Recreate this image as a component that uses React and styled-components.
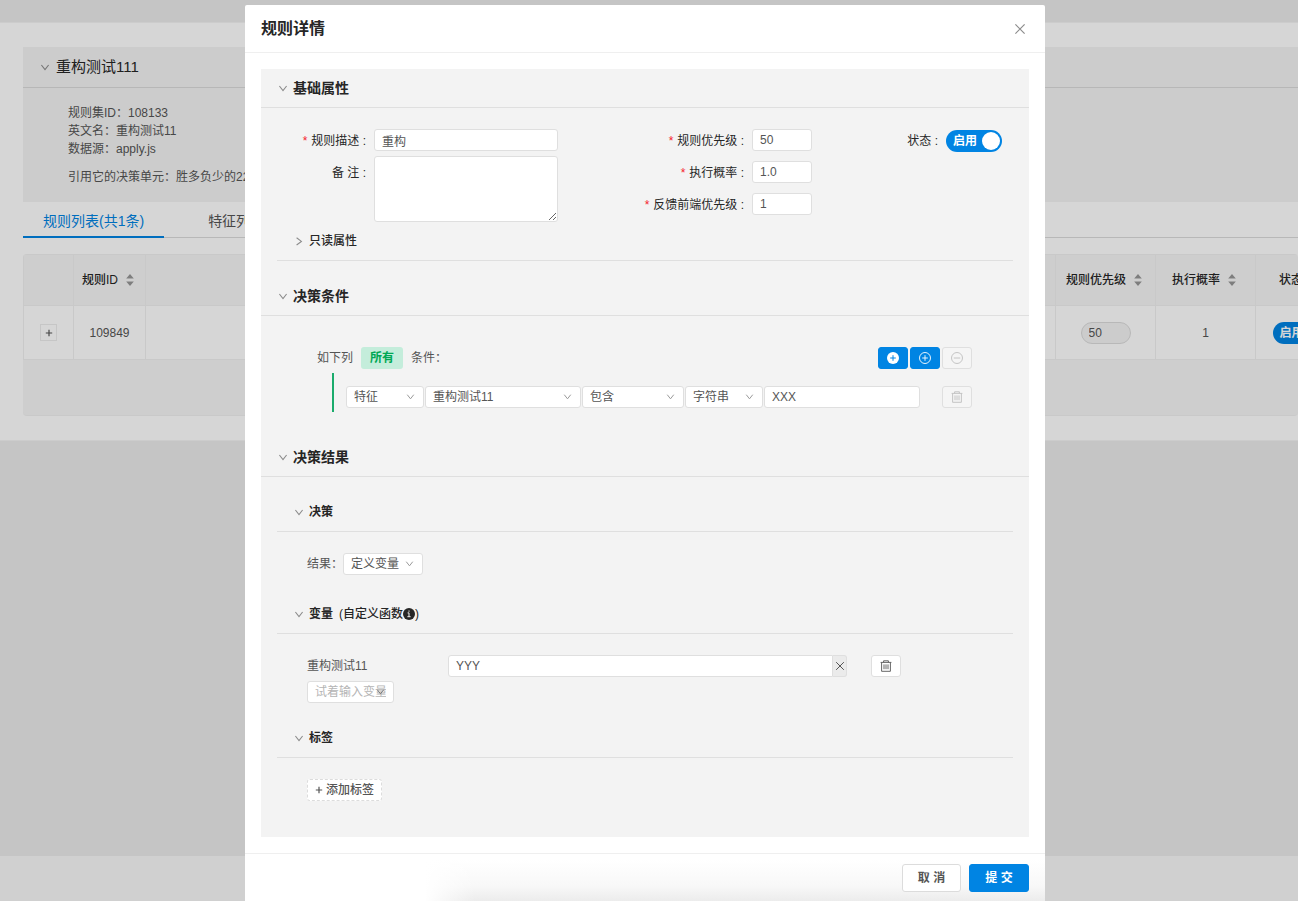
import React, { useState } from 'react';
import styled, { createGlobalStyle } from 'styled-components';

const GlobalStyle = createGlobalStyle`
  * {
    box-sizing: border-box;
  }

  body {
    margin: 0;
    overflow: hidden;
    color: #555;
    background: #ebebeb;
    font: 12px/18px "Liberation Sans", "Noto Sans CJK SC", sans-serif;
  }

  button, input, select, textarea {
    margin: 0;
    color: inherit;
    font: inherit;
  }

  h1, h2, h3, p {
    margin: 0;
  }
`;

// ---------- icons ----------

const Icon = styled.svg`
  display: block;
  flex: none;
  width: ${({ $size }) => $size || 12}px;
  height: ${({ $size }) => $size || 12}px;
  fill: none;
  stroke: currentColor;
`;

const ChevronDown = ({ size = 10 }) => (
  <Icon $size={size} viewBox="0 0 10 10" aria-hidden="true">
    <path d="M1.4 3 5 7.6 8.6 3" strokeWidth="1.1" />
  </Icon>
);

const ChevronRight = () => (
  <Icon $size={10} viewBox="0 0 10 10" aria-hidden="true">
    <path d="M2.6 1.8 7.4 5.4 2.6 9" strokeWidth="1.1" />
  </Icon>
);

const CloseIcon = ({ size = 12 }) => (
  <Icon $size={size} viewBox="0 0 12 12" aria-hidden="true">
    <path d="M1.4 1.4 10.6 10.6M10.6 1.4 1.4 10.6" strokeWidth="1.2" />
  </Icon>
);

const PlusIcon = () => (
  <Icon $size={8} viewBox="0 0 8 8" aria-hidden="true">
    <path d="M4 .8v6.4M.8 4h6.4" strokeWidth="1.2" />
  </Icon>
);

const PlusCircleFilled = () => (
  <Icon $size={12} viewBox="0 0 12 12" aria-hidden="true">
    <circle cx="6" cy="6" r="6" fill="#fff" stroke="none" />
    <path d="M6 3.2v5.6M3.2 6h5.6" stroke="#0084e3" />
  </Icon>
);

const PlusCircle = () => (
  <Icon $size={12} viewBox="0 0 12 12" aria-hidden="true">
    <circle cx="6" cy="6" r="5.5" strokeWidth=".9" />
    <path d="M6 3.2v5.6M3.2 6h5.6" strokeWidth=".9" />
  </Icon>
);

const MinusCircle = () => (
  <Icon $size={12} viewBox="0 0 12 12" aria-hidden="true">
    <circle cx="6" cy="6" r="5.5" strokeWidth=".9" />
    <path d="M2.8 6h6.4" strokeWidth=".9" />
  </Icon>
);

const TrashIcon = () => (
  <Icon $size={12} viewBox="0 0 12 12" aria-hidden="true">
    <path d="M.6 2.4h10.8M3.6 2.3V.8h4.8v1.5M1.6 2.6v8.7h8.8V2.6M4 4.4v4.8M6 4.4v4.8M8 4.4v4.8" strokeWidth=".9" />
  </Icon>
);

const SortIcon = () => (
  <Icon $size={14} viewBox="0 0 14 14" aria-hidden="true">
    <path d="M7 1 10.8 5.4H3.2zM7 13 3.2 8.6h7.6z" fill="#979797" stroke="none" />
  </Icon>
);

const InfoIcon = () => (
  <Icon $size={12} viewBox="0 0 12 12" aria-hidden="true">
    <circle cx="6" cy="6" r="6" fill="currentColor" stroke="none" />
    <path d="M4.6 4.9H6v3.6M4.4 8.7h3.2M6 2.5v1.2" stroke="#f3f3f3" />
  </Icon>
);

// ---------- page behind the dialog ----------

const Page = styled.div`
  display: flex;
  flex-direction: column;
  min-height: 100vh;
  overflow: hidden;
`;

const TopBar = styled.div`
  height: 23px;
  border-bottom: 1px solid #f3f3f3;
`;

const Content = styled.main`
  padding: 24px 0 24px 23px;
  background: #fff;
  border-bottom: 1px solid #f3f3f3;
`;

const PageFooter = styled.footer`
  height: 45px;
  margin-top: auto;
  background: #f8f8f8;
`;

const Summary = styled.section`
  background: #f3f3f3;
`;

const SummaryHead = styled.h1`
  display: flex;
  align-items: center;
  gap: 6px;
  height: 41px;
  padding-left: 17px;
  color: #262626;
  border-bottom: 1px solid #dadada;
  font-size: 15px;
  font-weight: 400;

  svg {
    color: #8c8c8c;
  }
`;

const SummaryBody = styled.div`
  padding: 16px 45px;

  p:last-child {
    margin-top: 10px;
  }
`;

const Tabs = styled.nav`
  display: flex;
  gap: 24px;
  height: 36px;
  margin-bottom: 16px;
  border-bottom: 1px solid #dcdcdc;
`;

const Tab = styled.button`
  height: 36px;
  padding: 3px 20px 0;
  color: ${({ $active }) => ($active ? '#0084e3' : '#555')};
  background: none;
  border: 0;
  border-bottom: 2px solid ${({ $active }) => ($active ? '#0084e3' : 'transparent')};
  font-size: 14px;
`;

const TableBox = styled.div`
  overflow: hidden;
  background: #f6f6f6;
  padding-bottom: 55px;
  border-bottom: 1px solid #f0f0f0;
  border-radius: 4px;
`;

// the last columns run past the right edge of the window
const Table = styled.table`
  width: calc(100% + 48px);
  table-layout: fixed;
  border-collapse: separate;
  border-spacing: 0;
  border: 1px solid #f0f0f0;
  border-width: 1px 0 0 1px;
  text-align: center;

  th, td {
    padding: 0;
    border: 1px solid #f0f0f0;
    border-width: 0 1px 1px 0;
  }

  th {
    height: 51px;
    color: #262626;
    font-weight: 500;
  }

  td {
    height: 54px;
    background: #fff;
  }
`;

const Column = styled.col`
  width: ${({ $width }) => ($width ? `${$width}px` : 'auto')};
`;

const SortHead = styled.span`
  display: flex;
  align-items: center;
  justify-content: center;
  gap: 5px;
`;

const ExpandButton = styled.button`
  display: grid;
  place-items: center;
  width: 17px;
  height: 17px;
  margin: 0 auto;
  padding: 0;
  background: #fff;
  border: 1px solid #ececec;
`;

const PriorityInput = styled.input`
  display: block;
  width: 50px;
  height: 22px;
  margin: 0 auto;
  padding: 0 7px;
  background: #f3f3f3;
  border: 1px solid #dcdcdc;
  border-radius: 11px;
`;

// ---------- dialog ----------

const Mask = styled.div`
  position: fixed;
  inset: 0;
  padding: 5px 8px 0 0;
  overflow: hidden;
  background: rgba(0, 0, 0, 0.16);
`;

const Dialog = styled.div`
  width: 100%;
  max-width: 800px;
  margin: 0 auto;
  background: #fff;
  border-radius: 2px;
`;

const DialogHead = styled.header`
  display: flex;
  align-items: center;
  justify-content: space-between;
  height: 48px;
  padding: 0 16px;
  border-bottom: 1px solid #efefef;
`;

const DialogTitle = styled.h2`
  color: #262626;
  font-size: 16px;
  line-height: 24px;
  font-weight: 700;
`;

const PlainButton = styled.button`
  padding: 3px;
  color: #8c8c8c;
  background: none;
  border: 0;
`;

const DialogBody = styled.div`
  padding: 16px;
`;

const DialogFoot = styled.footer`
  display: flex;
  justify-content: flex-end;
  gap: 8px;
  padding: 10px 16px;
  border-top: 1px solid #efefef;
  background:
    linear-gradient(to right, #fff 180px, transparent 230px),
    linear-gradient(to bottom, #fff 6px, #f8f8f8 32px, #ebebeb 48px);
`;

const FootButton = styled.button`
  min-width: ${({ $primary }) => ($primary ? 60 : 59)}px;
  height: 28px;
  padding: 0;
  color: ${({ $primary }) => ($primary ? '#fff' : '#555')};
  background: ${({ $primary }) => ($primary ? '#0084e3' : '#fff')};
  border: 1px solid ${({ $primary }) => ($primary ? '#0084e3' : '#dcdcdc')};
  border-radius: 3px;
  font-weight: 700;
`;

const Panels = styled.div`
  padding-bottom: 36px;
  background: #f3f3f3;
`;

const PanelHead = styled.h3`
  display: flex;
  align-items: center;
  gap: 6px;
  height: 39px;
  margin: ${({ $sub }) => ($sub ? '0 16px' : '0')};
  padding-left: 17px;
  color: #262626;
  border-bottom: 1px solid #dfdfdf;
  font-size: ${({ $sub }) => ($sub ? 12 : 14)}px;
  font-weight: ${({ $light }) => ($light ? 500 : 700)};
`;

const ToggleButton = styled.button`
  display: flex;
  align-items: center;
  gap: 5px;
  padding: 0;
  background: none;
  border: 0;

  svg {
    color: #8c8c8c;
  }
`;

const Note = styled.span`
  display: flex;
  align-items: center;
  font-weight: 500;
`;

const BasicForm = styled.div`
  display: grid;
  grid-template-columns: 297px 254px 1fr;
  padding: 21px 27px 0 0;
`;

const FormColumn = styled.div`
  display: flex;
  flex-direction: column;
  align-items: flex-end;
  gap: ${({ $gap }) => $gap || 10}px;
`;

const Field = styled.div`
  display: flex;
  gap: 8px;
`;

const Label = styled.label`
  padding-top: ${({ $low }) => ($low ? 8 : 3)}px;
  color: #262626;

  &::before {
    content: ${({ $required }) => ($required ? '"*"' : 'none')};
    margin-right: 4px;
    color: #f5222d;
  }
`;

const Input = styled.input`
  width: ${({ $width }) => $width}px;
  height: 22px;
  padding: 0 7px;
  background: #fff;
  border: 1px solid #dfdfdf;
  border-radius: 3px;
  outline: 0;
`;

const Remark = styled.textarea`
  display: block;
  width: 184px;
  height: 66px;
  padding: 2px 7px;
  background: #fff;
  border: 1px solid #dfdfdf;
  border-radius: 3px;
`;

const SwitchBox = styled.label`
  display: flex;
  align-items: center;
  gap: 5px;
  width: 56px;
  height: 22px;
  padding: 0 2px 0 7px;
  color: #fff;
  background: #0084e3;
  border-radius: 11px;
  font-weight: 700;

  input {
    appearance: none;
    order: 1;
    flex: none;
    width: 18px;
    height: 18px;
    background: #fff;
    border-radius: 9px;
  }
`;

const SwitchSlot = styled.div`
  display: flex;
  justify-content: center;
`;

const SwitchField = styled(Field)`
  padding-top: 1px;

  ${Label} {
    padding-top: 2px;
  }
`;

const Conditions = styled.div`
  padding: 31px 57px 26px 56px;
`;

const ConditionHead = styled.div`
  display: flex;
  align-items: center;
  gap: 8px;
  margin-bottom: 4px;
`;

const MatchTag = styled.button`
  height: 22px;
  padding: 0 9px;
  color: #00a854;
  background: #c4eddb;
  border: 0;
  border-radius: 3px;
  font-weight: 700;
`;

const IconButtons = styled.div`
  display: flex;
  gap: 2px;
  margin-left: auto;
`;

const IconButton = styled.button`
  display: grid;
  place-items: center;
  width: 30px;
  height: 22px;
  padding: 0;
  color: ${({ $primary, disabled }) => ($primary ? '#fff' : disabled ? '#bfbfbf' : '#555')};
  background: ${({ $primary, disabled }) => ($primary ? '#0084e3' : disabled ? '#f5f5f5' : '#fff')};
  border: 1px solid ${({ $primary }) => ($primary ? '#0084e3' : '#dfdfdf')};
  border-radius: 3px;
`;

const ConditionRow = styled.div`
  display: flex;
  gap: 1px;
  margin-left: 15px;
  padding: 13px 0 4px 12px;
  border-left: 2px solid #1aab6c;

  > button {
    margin-left: auto;
  }
`;

const SelectBox = styled.span`
  position: relative;
  display: block;
  width: ${({ $width }) => $width}px;

  select {
    display: block;
    appearance: none;
    width: 100%;
    height: 22px;
    padding: 0 7px;
    color: ${({ $empty }) => ($empty ? '#b5b5b5' : '#555')};
    background: #fff;
    border: 1px solid #dfdfdf;
    border-radius: 3px;
  }

  svg {
    position: absolute;
    top: 6px;
    right: 9px;
    color: ${({ $empty }) => ($empty ? '#777' : '#999')};
    pointer-events: none;
  }
`;

const SubPanels = styled.div`
  padding-top: 16px;
`;

const SubPanel = styled.div`
  padding: 21px 46px ${({ $bottom }) => $bottom || 0}px;
`;

const ResultRow = styled.div`
  display: flex;
  align-items: center;
`;

const VariableRow = styled.div`
  display: grid;
  grid-template-columns: 141px minmax(0, 399px) 30px;
  align-items: center;
  margin-bottom: 4px;

  > button {
    margin-left: 24px;
  }
`;

const InputGroup = styled.div`
  display: flex;

  input {
    flex: 1;
    min-width: 0;
    border-radius: 3px 0 0 3px;
  }
`;

const ClearButton = styled.button`
  display: grid;
  place-items: center;
  width: 14px;
  height: 22px;
  padding: 0;
  background: #ebebeb;
  border: 1px solid #dfdfdf;
  border-left: 0;
  border-radius: 0 3px 3px 0;
`;

const AddTag = styled.button`
  display: flex;
  align-items: center;
  gap: 3px;
  height: 22px;
  padding: 0 7px;
  background: #fff;
  border: 1px dashed #dcdcdc;
  border-radius: 3px;
  font-weight: 500;
`;

const Select = ({ width, label, value, empty }) => (
  <SelectBox $width={width} $empty={empty}>
    <select aria-label={label} defaultValue={value}>
      <option>{value}</option>
    </select>
    <ChevronDown size={9} />
  </SelectBox>
);

const Switch = ({ label }) => {
  const [on, setOn] = useState(true);

  return (
    <SwitchBox>
      <input type="checkbox" role="switch" aria-label={label} checked={on} onChange={() => setOn(!on)} />
      启用
    </SwitchBox>
  );
};

const Head = ({ title, sub, closed, children }) => (
  <PanelHead $sub={sub} $light={closed}>
    <ToggleButton>
      {closed ? <ChevronRight /> : <ChevronDown />}
      {title}
    </ToggleButton>
    {children}
  </PanelHead>
);

const priorities = [
  { id: 'priority', label: '规则优先级', value: '50' },
  { id: 'rate', label: '执行概率', value: '1.0' },
  { id: 'feedback', label: '反馈前端优先级', value: '1' },
];

const conditionSelects = [
  { label: '类型', value: '特征', width: 78 },
  { label: '变量', value: '重构测试11', width: 156 },
  { label: '运算符', value: '包含', width: 102 },
  { label: '值类型', value: '字符串', width: 78 },
];

const RulesPage = () => (
  <Page>
    <TopBar />
    <Content>
      <Summary>
        <SummaryHead>
          <ChevronDown />
          重构测试111
        </SummaryHead>
        <SummaryBody>
          <p>规则集ID：108133</p>
          <p>英文名：重构测试11</p>
          <p>数据源：apply.js</p>
          <p>引用它的决策单元：胜多负少的222</p>
        </SummaryBody>
      </Summary>
      <Tabs>
        <Tab $active>规则列表(共1条)</Tab>
        <Tab>特征列表</Tab>
      </Tabs>
      <TableBox>
        <Table>
          <colgroup>
            <Column $width={50} />
            <Column $width={72} />
            <Column />
            <Column $width={100} />
            <Column $width={100} />
            <Column $width={90} />
          </colgroup>
          <thead>
            <tr>
              <th />
              <th><SortHead>规则ID<SortIcon /></SortHead></th>
              <th />
              <th><SortHead>规则优先级<SortIcon /></SortHead></th>
              <th><SortHead>执行概率<SortIcon /></SortHead></th>
              <th><SortHead>状态<SortIcon /></SortHead></th>
            </tr>
          </thead>
          <tbody>
            <tr>
              <td><ExpandButton aria-label="展开"><PlusIcon /></ExpandButton></td>
              <td>109849</td>
              <td />
              <td><PriorityInput aria-label="规则优先级" defaultValue="50" /></td>
              <td>1</td>
              <td><SwitchSlot><Switch label="状态" /></SwitchSlot></td>
            </tr>
          </tbody>
        </Table>
      </TableBox>
    </Content>
    <PageFooter />
  </Page>
);

const RuleDialog = () => (
  <Dialog role="dialog" aria-labelledby="dialog-title">
    <DialogHead>
      <DialogTitle id="dialog-title">规则详情</DialogTitle>
      <PlainButton aria-label="关闭"><CloseIcon /></PlainButton>
    </DialogHead>
    <DialogBody>
      <Panels>
        <Head title="基础属性" />
        <BasicForm>
          <FormColumn $gap={5}>
            <Field>
              <Label $required htmlFor="desc">规则描述 :</Label>
              <Input $width={184} id="desc" defaultValue="重构" />
            </Field>
            <Field>
              <Label $low htmlFor="remark">备 注 :</Label>
              <Remark id="remark" />
            </Field>
          </FormColumn>
          <FormColumn>
            {priorities.map(({ id, label, value }) => (
              <Field key={id}>
                <Label $required htmlFor={id}>{label} :</Label>
                <Input $width={60} id={id} defaultValue={value} />
              </Field>
            ))}
          </FormColumn>
          <FormColumn>
            <SwitchField>
              <Label as="span">状态 :</Label>
              <Switch label="状态" />
            </SwitchField>
          </FormColumn>
        </BasicForm>
        <Head sub closed title="只读属性" />

        <SubPanels>
          <Head title="决策条件" />
          <Conditions>
            <ConditionHead>
              如下列
              <MatchTag>所有</MatchTag>
              条件：
              <IconButtons>
                <IconButton $primary aria-label="添加条件"><PlusCircleFilled /></IconButton>
                <IconButton $primary aria-label="添加条件组"><PlusCircle /></IconButton>
                <IconButton disabled aria-label="删除条件组"><MinusCircle /></IconButton>
              </IconButtons>
            </ConditionHead>
            <ConditionRow>
              {conditionSelects.map((item) => <Select key={item.label} {...item} />)}
              <Input $width={156} aria-label="值" defaultValue="XXX" />
              <IconButton disabled aria-label="删除条件"><TrashIcon /></IconButton>
            </ConditionRow>
          </Conditions>
        </SubPanels>

        <Head title="决策结果" />
        <SubPanels>
          <Head sub title="决策" />
          <SubPanel $bottom={20}>
            <ResultRow>
              结果：
              <Select label="结果" value="定义变量" width={80} />
            </ResultRow>
          </SubPanel>
          <Head sub title="变量">
            <Note>(自定义函数<InfoIcon />)</Note>
          </Head>
          <SubPanel $bottom={16}>
            <VariableRow>
              <label htmlFor="variable">重构测试11</label>
              <InputGroup>
                <Input id="variable" defaultValue="YYY" />
                <ClearButton aria-label="清除"><CloseIcon size={10} /></ClearButton>
              </InputGroup>
              <IconButton aria-label="删除变量"><TrashIcon /></IconButton>
            </VariableRow>
            <Select empty label="变量" value="试着输入变量" width={87} />
          </SubPanel>
          <Head sub title="标签" />
          <SubPanel>
            <AddTag><PlusIcon />添加标签</AddTag>
          </SubPanel>
        </SubPanels>
      </Panels>
    </DialogBody>
    <DialogFoot>
      <FootButton>取 消</FootButton>
      <FootButton $primary>提 交</FootButton>
    </DialogFoot>
  </Dialog>
);

const App = () => (
  <>
    <GlobalStyle />
    <RulesPage />
    <Mask>
      <RuleDialog />
    </Mask>
  </>
);

export default App;
